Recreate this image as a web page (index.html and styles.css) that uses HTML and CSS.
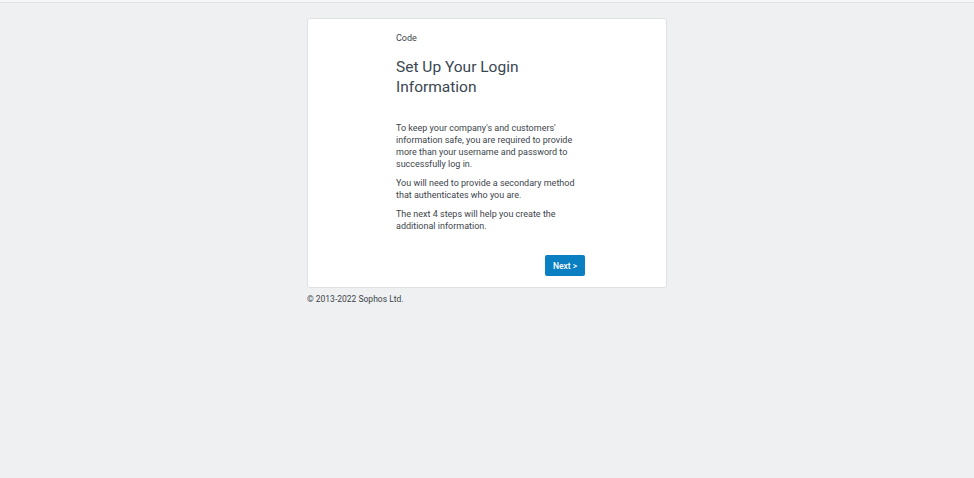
FILE: index.html
```html
<!DOCTYPE html>
<html lang="en">
  <head>
    <meta charset="UTF-8" />
    <meta name="viewport" content="width=device-width, initial-scale=1.0" />
    <title>Set Up Your Login Information</title>
    <link rel="stylesheet" href="styles.css">
  </head>
  <body>
    <div class="page">
      <div class="card">
        <div class="content">
          <p class="label">Code</p>
          <h1>Set Up Your Login Information</h1>
          <p>To keep your company's and customers' information safe, you are required to provide more than your username and password to successfully log in.</p>
          <p>You will need to provide a secondary method that authenticates who you are.</p>
          <p>The next 4 steps will help you create the additional information.</p>
          <div class="actions">
            <button id="nextBtn">Next &gt;</button>
          </div>
        </div>
      </div>
      <div class="footer">&copy; 2013-2022 Sophos Ltd.</div>
    </div>
  </body>
</html>
```

FILE: styles.css
```css
html {
  height: 100%;
}

body {
  font-family: Roboto, "Noto Sans", Arial, sans-serif;
  margin: 0;
  min-height: 100%;
  background-color: #eff0f2;
  border-top: 2px solid #f7f7f8;
  box-shadow: inset 0 1px 0 #e2e3e5;
  color: #3d444b;
}

.page {
  width: 360px;
  margin: 0 auto;
  padding-top: 16px;
}

.card {
  background-color: white;
  border: 1px solid #dfe1e4;
  border-radius: 3px;
  padding: 13px 82px 11px 88px;
}

.content {
  width: 189px;
}

.content p {
  font-size: 9px;
  line-height: 12px;
  margin: 0 0 7px;
}

.content .label {
  margin: 0;
}

h1 {
  font-size: 15.5px;
  font-weight: 400;
  line-height: 20px;
  color: #3a4651;
  margin: 13px 0 25px;
}

.actions {
  display: flex;
  justify-content: flex-end;
  margin-top: 23px;
}

#nextBtn {
  background-color: #0a80c2;
  color: white;
  border: none;
  border-radius: 2px;
  font-family: inherit;
  font-size: 8.5px;
  font-weight: 500;
  width: 40px;
  height: 21px;
  padding: 0;
  cursor: pointer;
}

.footer {
  font-size: 8.5px;
  margin-top: 6px;
  color: #3d444b;
}
```
